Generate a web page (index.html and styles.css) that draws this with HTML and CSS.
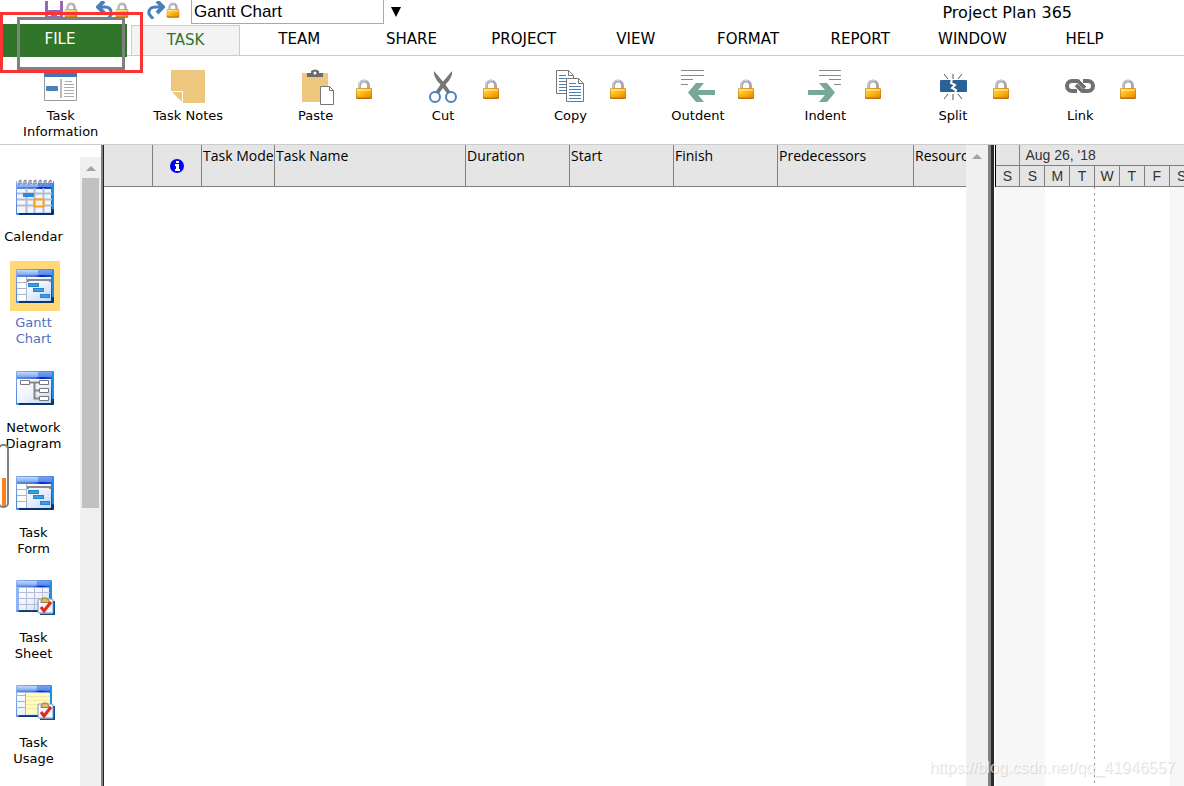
FILE: index.html
```html
<!DOCTYPE html>
<html lang="en">

<head>
    <meta charset="UTF-8" />
    <meta name="viewport" content="width=device-width, initial-scale=1.0" />
    <title>Project Plan 365</title>
    <link rel="stylesheet" href="styles.css">
</head>

<body>
    <!-- shared icon parts -->
    <svg class="defs" width="0" height="0" aria-hidden="true">
        <defs>
            <linearGradient id="gold" x1="0" y1="0" x2="1" y2="1">
                <stop offset="0" stop-color="#ffe45c" />
                <stop offset=".5" stop-color="#fcb414" />
                <stop offset="1" stop-color="#f08a00" />
            </linearGradient>
            <linearGradient id="bar" x1="0" y1="0" x2="0" y2="1">
                <stop offset="0" stop-color="#c4d9fc" />
                <stop offset="1" stop-color="#6c9cec" />
            </linearGradient>
            <linearGradient id="line" x1="0" y1="0" x2="1" y2="0">
                <stop offset="0" stop-color="#5c8ae0" />
                <stop offset=".5" stop-color="#4a78dc" />
                <stop offset=".7" stop-color="#0b1fcf" />
                <stop offset="1" stop-color="#1560e0" />
            </linearGradient>
            <linearGradient id="pane" x1="0" y1="0" x2="1" y2="1">
                <stop offset="0" stop-color="#fff" />
                <stop offset=".5" stop-color="#eef3fe" />
                <stop offset="1" stop-color="#c3d5fa" />
            </linearGradient>
            <linearGradient id="edge" x1="0" y1="0" x2="1" y2="1">
                <stop offset="0" stop-color="#86a9ea" />
                <stop offset=".6" stop-color="#3f7cd8" />
                <stop offset="1" stop-color="#002a5c" />
            </linearGradient>
            <symbol id="lock" viewBox="0 0 18 20">
                <path d="M4.500 11V6.500a4.500 4.500 0 0 1 9 0V11" fill="none" stroke="#aaa9b3" stroke-width="3" />
                <path d="M4 11V6.500a5 5 0 0 1 7-4.500" fill="none" stroke="#dcdce4" stroke-width="1" />
                <rect x="1" y="9" width="16" height="11" rx="1.500" fill="#b96f12" />
                <rect x="1.500" y="9.500" width="15" height="9" rx="1" fill="url(#gold)" />
                <path d="M2 11h14" stroke="#fff3a0" stroke-width="1" />
            </symbol>
            <symbol id="window" viewBox="0 0 38 34">
                <rect width="38" height="34" rx="1" fill="url(#edge)" />
                <path d="M3 33h34" stroke="#06366e" stroke-width="2" />
                <path d="M37 2v26" stroke="#1f8fe6" stroke-width="2" />
                <rect x="1" y="1" width="35" height="6" fill="url(#bar)" />
                <rect x="22" y="1" width="14" height="5" fill="#2d6be0" opacity=".5" />
                <rect x="1" y="6" width="35" height="2" fill="url(#line)" />
                <rect x="1" y="8" width="34" height="24" fill="url(#pane)" />
            </symbol>
            <symbol id="gantt" viewBox="0 0 38 34">
                <use href="#window" width="38" height="34" />
                <rect x="2" y="8" width="8" height="23" fill="#fff" />
                <path d="M1 13.500h9M1 19.500h9M1 25.500h9M10.500 8v24" stroke="#a9b3c9" />
                <path d="M12 13v-2h22v2" fill="none" stroke="#8b8b8b" stroke-width="2" />
                <rect x="12.500" y="14.500" width="10" height="3" fill="#3aa0e2" stroke="#2a82cc" />
                <rect x="17.500" y="19.500" width="10" height="3" fill="#3aa0e2" stroke="#2a82cc" />
                <rect x="24.500" y="25.500" width="9" height="3" fill="#3aa0e2" stroke="#2a82cc" />
            </symbol>
            <symbol id="clip" viewBox="0 0 18 18">
                <path d="M17 4v13.500H3" fill="none" stroke="#0a4f94" stroke-width="2" />
                <rect x="1" y="2" width="15" height="14" rx="1" fill="#f4f7ff" stroke="#7f95b8" />
                <path d="M4 5.500V3.500q1 0 2-2.500h4q1 2.500 2 2.500v2z" fill="#d6bd66" stroke="#9b7f30" />
                <path d="M4 10l3 4 7-9" fill="none" stroke="#e3291c" stroke-width="3" />
            </symbol>
        </defs>
    </svg>

    <header>
        <div class="quick">
            <button type="button" class="tool" aria-label="Save">
                <svg width="18" height="18" viewBox="0 0 18 18">
                    <path d="M1.500 0v16.500h15V0" fill="#fff" stroke="#9567b5" stroke-width="3" />
                    <path d="M3 10h12" stroke="#9567b5" stroke-width="2" />
                    <path d="M6 17v-4h6v4" fill="#9567b5" />
                </svg>
                <svg width="14" height="16"><use href="#lock" /></svg>
            </button>
            <button type="button" class="tool" aria-label="Undo">
                <svg width="18" height="18" viewBox="0 0 18 18">
                    <path d="M3 6h6q7 0 6 8l-3 4" fill="none" stroke="#4a80b9" stroke-width="3" />
                    <path d="M8 0L2 6l6 6" fill="none" stroke="#4a80b9" stroke-width="4" />
                </svg>
                <svg width="14" height="16"><use href="#lock" /></svg>
            </button>
            <button type="button" class="tool" aria-label="Redo">
                <svg width="18" height="18" viewBox="0 0 18 18">
                    <path d="M15 6H9q-8 0-7 7l4 5" fill="none" stroke="#4a80b9" stroke-width="3" />
                    <path d="M10 0l6 6-6 6" fill="none" stroke="#4a80b9" stroke-width="4" />
                </svg>
                <svg width="14" height="16"><use href="#lock" /></svg>
            </button>
            <input class="view-name" type="text" value="Gantt Chart" aria-label="View" />
            <button type="button" class="drop" aria-label="Choose view">
                <svg width="10" height="10" viewBox="0 0 10 10"><path d="M0 0h10L5 10z" /></svg>
            </button>
            <span class="app-name">Project Plan 365</span>
        </div>

        <nav class="tabs">
            <a href="#" class="file">FILE</a>
            <a href="#" class="tab active">TASK</a>
            <a href="#" class="tab">TEAM</a>
            <a href="#" class="tab">SHARE</a>
            <a href="#" class="tab">PROJECT</a>
            <a href="#" class="tab">VIEW</a>
            <a href="#" class="tab">FORMAT</a>
            <a href="#" class="tab">REPORT</a>
            <a href="#" class="tab">WINDOW</a>
            <a href="#" class="tab">HELP</a>
        </nav>

        <div class="ribbon">
            <button type="button" class="command">
                <svg class="icon" viewBox="0 0 36 36">
                    <path d="M1.500 3v28.500h32V3" fill="#fff" stroke="#999" />
                    <path d="M1 3h33v5H1z" fill="#4177b5" />
                    <path d="M18 10v19" stroke="#bbb" stroke-width="2" />
                    <rect x="3" y="17" width="12" height="5" rx="1" fill="#4a80b9" />
                    <path d="M22 12.500h7M21 15.500h10M21 18.500h10M21 21.500h10M21 24.500h10M21 27.500h10" stroke="#aaa" />
                </svg>
                <span class="label">Task<br />Information</span>
            </button>
            <button type="button" class="command">
                <svg class="icon" viewBox="0 0 36 36">
                    <path d="M1 1h34v33H13L1 22z" fill="#edc77e" />
                    <path d="M1.500 22.500h11v11" fill="none" stroke="#fff" />
                </svg>
                <span class="label">Task Notes</span>
            </button>
            <button type="button" class="command">
                <svg class="icon" viewBox="0 0 36 36">
                    <rect x="4" y="4" width="26" height="29" fill="#edc77e" />
                    <path d="M9 8V4h4V2q4-3 8 0v2h4v4z" fill="#6b6b6b" />
                    <circle cx="17" cy="4" r="1.500" fill="#fff" />
                    <path d="M22.500 17.500h9l4 4v14h-13z" fill="#fff" stroke="#777" />
                    <path d="M31.500 17.500v4h4" fill="none" stroke="#777" />
                </svg>
                <svg class="lock" width="18" height="20"><use href="#lock" /></svg>
                <span class="label">Paste</span>
            </button>
            <button type="button" class="command">
                <svg class="icon" viewBox="0 0 36 36">
                    <path d="M9 2q-1 6 6 13l9 12 3-2-7-10z" fill="#777" />
                    <path d="M27 2q1 6-6 13l-9 12-3-2 7-10z" fill="#777" />
                    <circle cx="10" cy="28" r="5" fill="#fff" stroke="#4a80c0" stroke-width="2" />
                    <circle cx="26" cy="28" r="5" fill="#fff" stroke="#4a80c0" stroke-width="2" />
                </svg>
                <svg class="lock" width="18" height="20"><use href="#lock" /></svg>
                <span class="label">Cut</span>
            </button>
            <button type="button" class="command">
                <svg class="icon" viewBox="0 0 36 36">
                    <path d="M4.500 1.500h12l5 5v18h-17z" fill="#fff" stroke="#777" />
                    <path d="M16.500 1.500v5h5" fill="none" stroke="#777" />
                    <path d="M7 6.500h7M7 9.500h7M7 12.500h11M7 15.500h11M7 18.500h11M7 21.500h11" stroke="#4a80b9" />
                    <path d="M14.500 9.500h12l5 5v18h-17z" fill="#fff" stroke="#777" />
                    <path d="M26.500 9.500v5h5" fill="none" stroke="#777" />
                    <path d="M17 14.500h7M17 17.500h12M17 20.500h12M17 23.500h12M17 26.500h12M17 29.500h12" stroke="#4a80b9" />
                </svg>
                <svg class="lock" width="18" height="20"><use href="#lock" /></svg>
                <span class="label">Copy</span>
            </button>
            <button type="button" class="command">
                <svg class="icon" viewBox="0 0 36 36">
                    <path d="M1 1.500h23M1 6.500h23M1 10.500h12M1 15.500h7" stroke="#888" />
                    <path d="M12 23.500h23" stroke="#78a896" stroke-width="5" />
                    <path d="M16 14h8l-8 9.500L24 33h-8l-8-9.500z" fill="#78a896" />
                </svg>
                <svg class="lock" width="18" height="20"><use href="#lock" /></svg>
                <span class="label">Outdent</span>
            </button>
            <button type="button" class="command">
                <svg class="icon" viewBox="0 0 36 36">
                    <path d="M12 1.500h22M12 6.500h22M22 10.500h12M27 15.500h7" stroke="#888" />
                    <path d="M1 23.500h23" stroke="#78a896" stroke-width="5" />
                    <path d="M20 14h-8l8 9.500L12 33h8l8-9.500z" fill="#78a896" />
                </svg>
                <svg class="lock" width="18" height="20"><use href="#lock" /></svg>
                <span class="label">Indent</span>
            </button>
            <button type="button" class="command">
                <svg class="icon" viewBox="0 0 36 36">
                    <rect x="5" y="11" width="27" height="12" rx="1" fill="#2b6197" />
                    <path d="M17 10l-1 4 4 2-3 3 4 2-1 3" fill="none" stroke="#fff" stroke-width="2" />
                    <path d="M18 5v5M18 25v6M9 5l4 5M27 5l-4 5M13 25l-4 5M23 25l4 5" stroke="#555" />
                </svg>
                <svg class="lock" width="18" height="20"><use href="#lock" /></svg>
                <span class="label">Split</span>
            </button>
            <button type="button" class="command">
                <svg class="icon" viewBox="0 0 36 36">
                    <path d="M15 22h-5a5 5 0 0 1 0-10h5q2 0 4 3l4 4" fill="none" stroke="#707070" stroke-width="4" />
                    <path d="M21 12h5a5 5 0 0 1 0 10h-5q-2 0-4-3l-3-3" fill="none" stroke="#707070" stroke-width="4" />
                    <path d="M18 11l6 6M12 17l6 6" stroke="#fff" />
                </svg>
                <svg class="lock" width="18" height="20"><use href="#lock" /></svg>
                <span class="label">Link</span>
            </button>
        </div>
    </header>

    <main>
        <aside>
            <nav class="views">
                <a href="#" class="view">
                    <span class="thumb">
                        <svg width="38" height="36" viewBox="0 0 38 36">
                            <use href="#window" y="2" width="38" height="34" />
                            <rect x="2" y="10" width="33" height="23" fill="#f3f6fe" />
                            <path d="M1 14.500h35M1 20.500h35M1 26.500h35M10.500 9v25M18.500 9v25M27.500 9v25" stroke="#b4bccf" stroke-width="2" />
                            <rect x="7" y="14" width="11" height="4" fill="#2f87d8" />
                            <rect x="18.500" y="20.500" width="9" height="7" fill="#f1f1f4" stroke="#f7a11c" stroke-width="2" />
                            <path d="M1 0h36v4H1z" fill="#fff" />
                            <path d="M3 6V2l2-1v4M8 6V2l2-1v4M13 6V2l2-1v4M18 6V2l2-1v4M23 6V2l2-1v4M28 6V2l2-1v4M33 6V2l2-1v4" fill="none" stroke="#667191" />
                        </svg>
                    </span>
                    Calendar
                </a>
                <a href="#" class="view active">
                    <span class="thumb"><svg width="38" height="34"><use href="#gantt" /></svg></span>
                    Gantt<br />Chart
                </a>
                <a href="#" class="view">
                    <span class="thumb">
                        <svg width="38" height="34" viewBox="0 0 38 34">
                            <use href="#window" width="38" height="34" />
                            <path d="M13 11.500h11M18.500 11v16.500H24M18.500 19.500H24" fill="none" stroke="#858585" stroke-width="2" />
                            <path d="M4.500 9.500h9v4h-9zM23.500 9.500h9v4h-9zM23.500 17.500h9v4h-9zM23.500 25.500h9v4h-9z" fill="#fff" stroke="#777" />
                        </svg>
                    </span>
                    Network<br />Diagram
                </a>
                <a href="#" class="view">
                    <span class="thumb"><svg width="38" height="34"><use href="#gantt" /></svg></span>
                    Task<br />Form
                </a>
                <a href="#" class="view">
                    <span class="thumb">
                        <svg width="40" height="36" viewBox="0 0 40 36">
                            <use href="#window" width="38" height="32" />
                            <rect x="1" y="8" width="3" height="22" fill="#8db4f4" />
                            <path d="M4 12.500h31M4 18.500h31M4 24.500h31M11.500 8v22M19.500 8v22M27.500 8v22" stroke="#b4bcd6" />
                            <use href="#clip" x="22" y="17" width="18" height="18" />
                        </svg>
                    </span>
                    Task<br />Sheet
                </a>
                <a href="#" class="view">
                    <span class="thumb">
                        <svg width="40" height="36" viewBox="0 0 40 36">
                            <use href="#window" width="38" height="32" />
                            <rect x="10" y="8" width="25" height="21" fill="#fffdb8" />
                            <path d="M11 11.500h24M11 15.500h24M11 19.500h24M11 23.500h24" stroke="#f0e8ae" />
                            <path d="M1 10.500h9M1 16.500h9M1 22.500h9M10.500 8v22" stroke="#a9b3c9" />
                            <use href="#clip" x="22" y="17" width="18" height="18" />
                        </svg>
                    </span>
                    Task<br />Usage
                </a>
            </nav>
            <div class="scroll">
                <span class="arrow"></span>
                <span class="grip"></span>
            </div>
        </aside>

        <section class="sheet">
            <div class="sheet-body">
                <table class="fields">
                    <colgroup>
                        <col class="w-id" />
                        <col class="w-id" />
                        <col class="w-mode" />
                        <col class="w-name" />
                        <col class="w-date" />
                        <col class="w-date" />
                        <col class="w-date" />
                        <col class="w-pred" />
                        <col class="w-date" />
                    </colgroup>
                    <thead>
                        <tr>
                            <th></th>
                            <th class="info">
                                <svg width="14" height="14" viewBox="0 0 14 14" role="img" aria-label="Indicators">
                                    <circle cx="7" cy="7" r="7" fill="#0000f5" />
                                    <path d="M6 2h3v2H6zM5 5h4v5h1v2H5v-2h1V7H5z" fill="#fff" />
                                </svg>
                            </th>
                            <th>Task Mode</th>
                            <th>Task Name</th>
                            <th>Duration</th>
                            <th>Start</th>
                            <th>Finish</th>
                            <th>Predecessors</th>
                            <th>Resource</th>
                        </tr>
                    </thead>
                </table>
            </div>
            <div class="scroll plain"><span class="arrow"></span></div>
        </section>

        <section class="chart">
            <table class="timescale">
                <thead>
                    <tr>
                        <th></th>
                        <th class="week" colspan="7">Aug 26, '18</th>
                    </tr>
                    <tr>
                        <th>S</th>
                        <th>S</th>
                        <th>M</th>
                        <th>T</th>
                        <th>W</th>
                        <th>T</th>
                        <th>F</th>
                        <th>S</th>
                    </tr>
                </thead>
            </table>
            <div class="days">
                <div class="day off"></div>
                <div class="day off"></div>
                <div class="day"></div>
                <div class="day today"></div>
                <div class="day"></div>
                <div class="day"></div>
                <div class="day"></div>
                <div class="day off"></div>
            </div>
        </section>
    </main>

    <div class="mark red"></div>
    <div class="mark gray"></div>
    <div class="gauge"></div>
    <div class="watermark">https://blog.csdn.net/qq_41946557</div>
</body>

</html>
```
FILE: styles.css
```css
* {
    box-sizing: border-box;
}

body {
    margin: 0;
    height: 100vh;
    display: flex;
    flex-direction: column;
    overflow: hidden;
    position: relative;
    background: #fff;
    color: #000;
    font-family: Verdana, "DejaVu Sans", sans-serif;
    font-size: 13px;
    line-height: 16px;
}

a {
    color: inherit;
    text-decoration: none;
}

button {
    border: none;
    padding: 0;
    background: none;
    color: inherit;
    font: inherit;
}

.defs {
    position: absolute;
}

/* top bar */
.quick {
    display: flex;
    height: 24px;
    padding-left: 45px;
}

.tool {
    display: flex;
    align-items: center;
    gap: 1px;
    width: 51px;
    height: 20px;
}

.tool:nth-child(3) {
    width: 44px;
}

.view-name {
    width: 193px;
    height: 24px;
    border: 1px solid #a9a9a9;
    border-top: none;
    padding: 0 2px;
    font-family: "Liberation Sans", Arial, sans-serif;
    font-size: 17px;
}

.drop {
    width: 24px;
    display: flex;
    align-items: center;
    justify-content: center;
}

.app-name {
    margin-left: auto;
    margin-right: 112px;
    font-size: 16px;
    line-height: 25px;
}

.tabs {
    display: flex;
    height: 32px;
    padding-left: 3px;
    border-bottom: 1px solid #ccc;
    font-size: 15px;
    line-height: 31px;
    text-align: center;
}

.file {
    width: 124px;
    height: 33px;
    margin-right: 4px;
    padding-right: 10px;
    background: #31752a;
    color: #fff;
}

.tab {
    flex: 0 0 9.5%;
}

.tab.active {
    flex-basis: calc(9.5% - 3px);
    margin: 1px 3px 0 0;
    border: 1px solid #ccc;
    border-bottom: none;
    background: #f3f3f3;
    color: #31752a;
    line-height: 28px;
}

header {
    border-bottom: 1px solid #ccc;
}

.ribbon {
    display: grid;
    grid-template-columns: repeat(9, 1fr);
    height: 88px;
    margin: 0 40px 0 -3px;
    padding-top: 13px;
}

.command {
    display: grid;
    grid-template-columns: 1fr 36px 1fr;
    grid-template-rows: 36px auto;
    align-items: center;
    align-content: start;
    row-gap: 3px;
}

.icon {
    grid-column: 2;
    width: 36px;
    height: 36px;
}

.lock {
    grid-column: 3;
    margin: 4px 0 0 21px;
}

.label {
    grid-column: 1 / -1;
}

/* work area */
main {
    flex: 1;
    display: flex;
    min-height: 0;
}

aside {
    display: flex;
    border-right: 2px solid #808080;
}

.views {
    display: flex;
    flex-direction: column;
    gap: 16px;
    width: 80px;
    padding: 27px 13px 0 0;
}

.view {
    text-align: center;
}

.thumb {
    display: flex;
    align-items: center;
    justify-content: center;
    width: 50px;
    height: 50px;
    margin: 0 8px 7px 10px;
}

.view.active {
    color: #4a6fc4;
}

.view.active .thumb {
    margin-bottom: 4px;
    background: #ffd978;
}

.scroll {
    display: flex;
    flex-direction: column;
    align-items: center;
    width: 21px;
    margin-top: 12px;
    padding-top: 9px;
    background: #f0f0f0;
}

.scroll.plain {
    width: 22px;
    margin-top: 0;
}

.arrow {
    border: 5px solid transparent;
    border-top: none;
    border-bottom-color: #a3a3a3;
}

.grip {
    width: 17px;
    height: 330px;
    margin-top: 7px;
    background: #c1c1c1;
}

.sheet {
    flex: 1;
    display: flex;
    min-width: 0;
    border-left: 1px solid #222;
}

.sheet-body {
    flex: 1;
    overflow: hidden;
}

table {
    table-layout: fixed;
    border-collapse: separate;
    border-spacing: 0;
    background: #e5e5e5;
}

th {
    font-weight: normal;
    border-right: 1px solid #808080;
    border-bottom: 1px solid #808080;
}

.fields {
    width: 914px;
}

.fields th {
    height: 42px;
    padding: 3px 0 0 1px;
    font-family: "Segoe UI", "Open Sans", sans-serif;
    font-size: 14px;
    text-align: left;
    vertical-align: top;
    white-space: nowrap;
}

.fields .info {
    padding: 0;
    text-align: center;
    vertical-align: middle;
}

.info svg {
    display: block;
    margin: 0 auto;
}

.w-id {
    width: 49px;
}

.w-mode {
    width: 73px;
}

.w-name {
    width: 191px;
}

.w-date {
    width: 104px;
}

.w-pred {
    width: 136px;
}

/* gantt side */
.chart {
    flex: 0 0 calc(16% + 7px);
    display: flex;
    flex-direction: column;
    overflow: hidden;
    border-left: 3px solid #808080;
    box-shadow: inset 3px 0 #2b2b2b;
    padding-left: 4px;
}

.timescale {
    width: 200px;
    border-left: 1px solid #000;
}

.timescale th {
    height: 21px;
    padding: 0;
    color: #333;
    font-family: "Liberation Sans", Arial, sans-serif;
    font-size: 14px;
    text-align: center;
}

.timescale .week {
    padding-left: 5px;
    text-align: left;
}

.days {
    flex: 1;
    display: flex;
}

.day {
    flex: 0 0 25px;
}

.off {
    background: #f7f7f7;
}

.today {
    background: repeating-linear-gradient(#999 0 2px, transparent 2px 6px) right / 1px 100% no-repeat;
}

/* overlays */
.mark {
    position: absolute;
}

.red {
    left: 0;
    top: 12px;
    width: 143px;
    height: 61px;
    border: 3px solid #fa3434;
}

.gray {
    left: 17px;
    top: 17px;
    width: 108px;
    height: 53px;
    border: 3px solid #808080;
}

.gauge {
    position: absolute;
    left: -2px;
    top: 444px;
    width: 11px;
    height: 64px;
    border: 2px solid #808080;
    border-radius: 5px;
    background: linear-gradient(#ff7f1e, #ff7f1e) 2px 100% / 4px 28px no-repeat;
}

.watermark {
    position: absolute;
    right: 9px;
    bottom: 9px;
    color: rgba(255, 255, 255, .7);
    font-family: "Liberation Sans", Arial, sans-serif;
    font-size: 16px;
    line-height: 18px;
    text-shadow: 1px 1px 1px rgba(0, 0, 0, .15);
}
```
